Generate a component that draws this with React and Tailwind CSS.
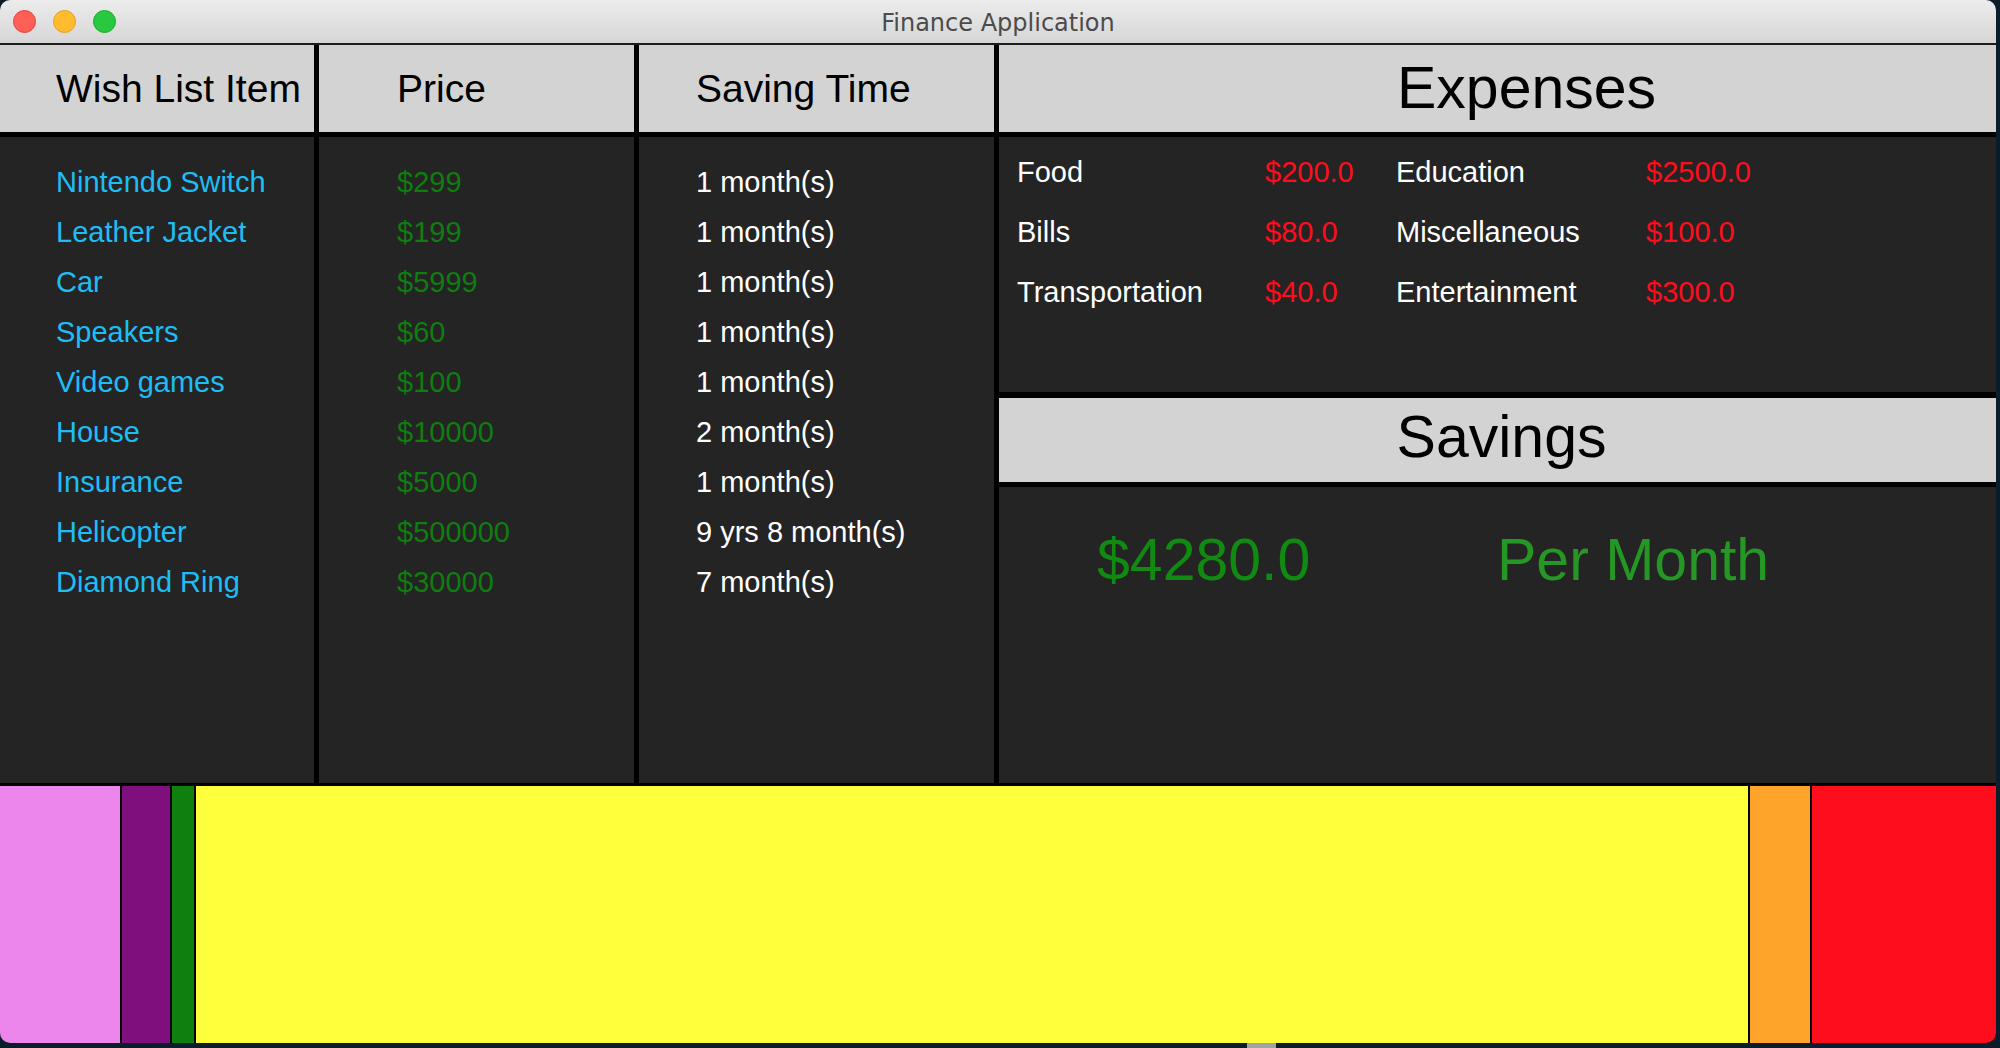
import React from 'react'

const wishList = [
    { name: 'Nintendo Switch', price: '$299', time: '1 month(s)' },
    { name: 'Leather Jacket', price: '$199', time: '1 month(s)' },
    { name: 'Car', price: '$5999', time: '1 month(s)' },
    { name: 'Speakers', price: '$60', time: '1 month(s)' },
    { name: 'Video games', price: '$100', time: '1 month(s)' },
    { name: 'House', price: '$10000', time: '2 month(s)' },
    { name: 'Insurance', price: '$5000', time: '1 month(s)' },
    { name: 'Helicopter', price: '$500000', time: '9 yrs 8 month(s)' },
    { name: 'Diamond Ring', price: '$30000', time: '7 month(s)' },
]

const expenses = [
    ['Food', '$200.0', 'Education', '$2500.0'],
    ['Bills', '$80.0', 'Miscellaneous', '$100.0'],
    ['Transportation', '$40.0', 'Entertainment', '$300.0'],
]

export default function App() {
    return (
        <div className="w-[2000px] h-[1048px] bg-[#0b1c2a] overflow-hidden" style={{ fontFamily: '"Liberation Sans", Arial, sans-serif' }}>

            <div className="w-[1996px] h-[1043px] rounded-[10px] overflow-hidden flex flex-col bg-black">

                {/* title bar */}
                <div className="h-[43px] flex items-center relative bg-gradient-to-b from-[#ececec] to-[#d6d6d6] border-b-2 border-[#1c1c1c] box-content">
                    <div className="flex gap-[17px] pl-[13px]">
                        <div className="w-[23px] h-[23px] rounded-full bg-[#fe5f57] border border-[#e0443e]"></div>
                        <div className="w-[23px] h-[23px] rounded-full bg-[#febc2e] border border-[#dea123]"></div>
                        <div className="w-[23px] h-[23px] rounded-full bg-[#28c840] border border-[#1aab29]"></div>
                    </div>
                    <div className="absolute inset-0 flex items-center justify-center pt-[3px] text-[24px] text-[#4b4b4b]" style={{ fontFamily: '"DejaVu Sans", sans-serif' }}>
                        Finance Application
                    </div>
                </div>

                {/* main area */}
                <div className="h-[738px] flex gap-[5px] bg-black">

                    <div className="w-[314px] flex flex-col gap-[5px]">
                        <div className="h-[87px] bg-[#d3d3d3] flex items-center pl-[56px] pt-[2px] text-[39px] text-black">Wish List Item</div>
                        <div className="flex-1 bg-[#242424] pt-[20px] pl-[56px]">
                            {wishList.map(w => (
                                <div key={w.name} className="text-[29px] leading-[50px] text-[#1fbdf5] whitespace-nowrap">{w.name}</div>
                            ))}
                        </div>
                    </div>

                    <div className="w-[315px] flex flex-col gap-[5px]">
                        <div className="h-[87px] bg-[#d3d3d3] flex items-center pl-[78px] pt-[2px] text-[39px] text-black">Price</div>
                        <div className="flex-1 bg-[#242424] pt-[20px] pl-[78px]">
                            {wishList.map(w => (
                                <div key={w.name} className="text-[29px] leading-[50px] text-[#0f7d0f]">{w.price}</div>
                            ))}
                        </div>
                    </div>

                    <div className="w-[355px] flex flex-col gap-[5px]">
                        <div className="h-[87px] bg-[#d3d3d3] flex items-center pl-[57px] pt-[2px] text-[39px] text-black">Saving Time</div>
                        <div className="flex-1 bg-[#242424] pt-[20px] pl-[57px]">
                            {wishList.map(w => (
                                <div key={w.name} className="text-[29px] leading-[50px] text-white whitespace-nowrap">{w.time}</div>
                            ))}
                        </div>
                    </div>

                    <div className="flex-1 flex flex-col">
                        <div className="h-[87px] bg-[#d3d3d3] flex items-center pl-[398px] text-[59px] text-black">Expenses</div>

                        <div className="h-[255px] mt-[5px] bg-[#242424] pt-[5px] pl-[18px]">
                            <div className="grid grid-cols-[248px_131px_250px_auto]">
                                {expenses.map(row => (
                                    <React.Fragment key={row[0]}>
                                        <div className="text-[29px] leading-[60px] text-white">{row[0]}</div>
                                        <div className="text-[29px] leading-[60px] text-[#ff0d1d]">{row[1]}</div>
                                        <div className="text-[29px] leading-[60px] text-white">{row[2]}</div>
                                        <div className="text-[29px] leading-[60px] text-[#ff0d1d]">{row[3]}</div>
                                    </React.Fragment>
                                ))}
                            </div>
                        </div>

                        <div className="h-[84px] mt-[6px] bg-[#d3d3d3] flex items-center justify-center pb-[6px] pl-[8px] text-[59px] text-black">Savings</div>

                        <div className="flex-1 mt-[5px] bg-[#242424] pt-[38px] pl-[98px] flex">
                            <div className="w-[400px] text-[59px] leading-[70px] text-[#118a11]">$4280.0</div>
                            <div className="text-[59px] leading-[70px] text-[#259725]">Per Month</div>
                        </div>
                    </div>
                </div>

                {/* spending bar */}
                <div className="h-[260px] border-t-[3px] border-black flex gap-[2px] bg-black">
                    <div className="w-[120px] bg-[#ec85ec]"></div>
                    <div className="w-[48px] bg-[#7f0f7c]"></div>
                    <div className="w-[22px] bg-[#0f7f0f]"></div>
                    <div className="w-[1552px] bg-[#ffff3c]"></div>
                    <div className="w-[60px] bg-[#fea42a]"></div>
                    <div className="flex-1 bg-[#fe0d1d]"></div>
                </div>
            </div>

            <div className="h-[5px] flex">
                <div className="ml-[1247px] w-[29px] h-[5px] bg-[#a3a3a3]"></div>
            </div>
        </div>
    )
}
